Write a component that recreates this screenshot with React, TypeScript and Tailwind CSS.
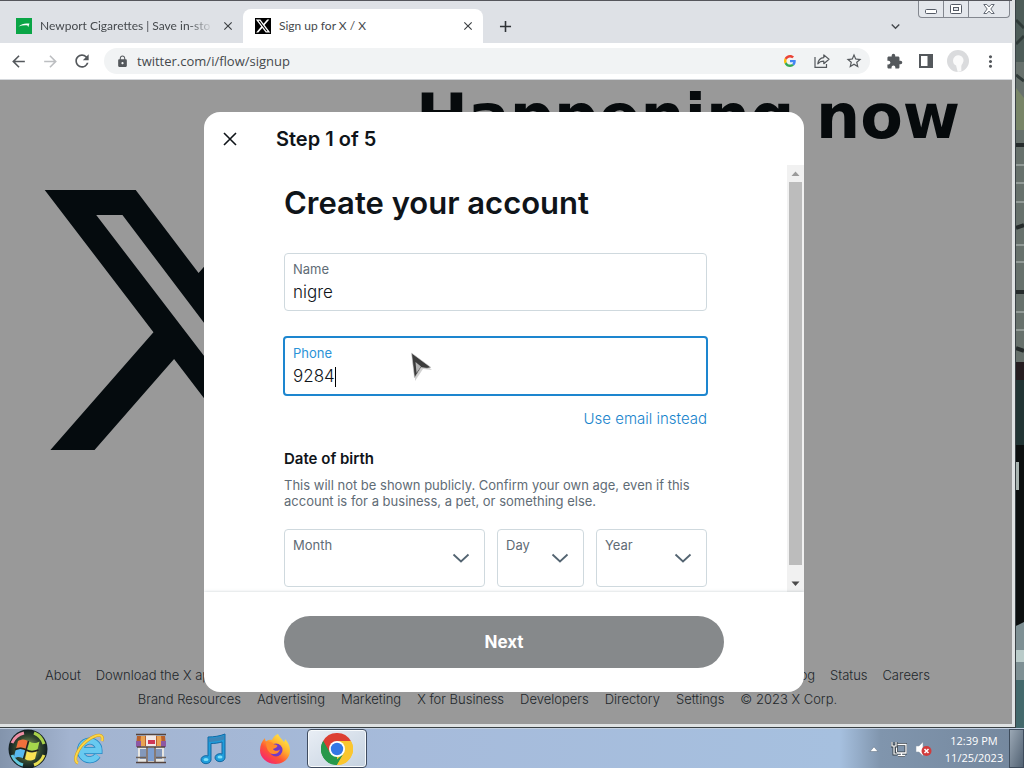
import type { ReactNode } from "react";
import {
  MdAdd,
  MdArrowBack,
  MdArrowForward,
  MdClose,
  MdExtension,
  MdKeyboardArrowDown,
  MdLock,
  MdMoreVert,
  MdRefresh,
  MdStarOutline,
} from "react-icons/md";

const X_PATH =
  "M18.244 2.25h3.308l-7.227 8.26 8.502 11.24H16.17l-5.214-6.817L4.99 21.75H1.68l7.73-8.835L1.254 2.25H8.08l4.713 6.231zm-1.161 17.52h1.833L7.084 4.126H5.117z";

const PRIMARY_LINKS = [
  "About",
  "Download the X app",
  "Help Center",
  "Terms of Service",
  "Privacy Policy",
  "Cookie Policy",
  "Accessibility",
  "Ads info",
  "Blog",
  "Status",
  "Careers",
];

const SECONDARY_LINKS = [
  "Brand Resources",
  "Advertising",
  "Marketing",
  "X for Business",
  "Developers",
  "Directory",
  "Settings",
];

function XLogo({ className }: { className?: string }) {
  return (
    <svg viewBox="0 0 24 24" className={className} fill="currentColor" aria-hidden>
      <path d={X_PATH} />
    </svg>
  );
}

/* ---------- browser chrome ---------- */

function TabStrip() {
  return (
    <div className="flex h-[43px] items-end border-t border-[#55565c] bg-[#dee1e6] font-['Lato','Noto_Sans',sans-serif] text-xs text-[#45494d]">
      <div className="flex h-[34px] w-[243px] items-center pr-2 pl-4">
        <svg viewBox="0 0 16 16" className="size-4 shrink-0" aria-hidden>
          <rect width="16" height="16" fill="#0aa546" />
          <path d="M2.500 8.600C5 6.400 7.500 5.600 10.500 5.400h3l-1.300 3.800-.6-1.800C8.500 7 5.500 7.400 2.500 8.600z" fill="#fff" />
        </svg>
        <span className="ml-2 flex-1 overflow-hidden whitespace-nowrap [mask-image:linear-gradient(to_right,black_86%,transparent)]">
          Newport Cigarettes | Save in-sto
        </span>
        <button type="button" aria-label="Close tab" className="ml-2 text-[#3c4043]">
          <MdClose size={14} />
        </button>
      </div>

      <div className="flex h-[34px] w-60 items-center rounded-t-lg bg-white pr-2 pl-3">
        <span className="flex size-4 shrink-0 items-center justify-center bg-black text-white">
          <XLogo className="size-4" />
        </span>
        <span className="ml-2 flex-1 whitespace-nowrap">Sign up for X / X</span>
        <button type="button" aria-label="Close tab" className="text-[#3c4043]">
          <MdClose size={14} />
        </button>
      </div>

      <button type="button" aria-label="New tab" className="flex h-[34px] w-11 items-center justify-center text-[#2f3236]">
        <MdAdd size={19} />
      </button>

      <div className="ml-auto flex h-full items-start">
        <button type="button" aria-label="Search tabs" className="mt-[17px] mr-3.5 text-[#45494d]">
          <MdKeyboardArrowDown size={17} />
        </button>
        <div className="mr-0.5 flex h-[17px] rounded-b border border-t-0 border-[#83878f] bg-[#e4e7ec]">
          <button type="button" aria-label="Minimize" className="flex w-[25px] items-center justify-center border-r border-[#83878f]">
            <svg viewBox="0 0 12 10" className="h-2.5 w-3" aria-hidden>
              <rect x=".5" y="5.500" width="11" height="4" rx="1" fill="#fff" stroke="#555b66" />
            </svg>
          </button>
          <button type="button" aria-label="Maximize" className="flex w-[25px] items-center justify-center border-r border-[#83878f]">
            <svg viewBox="0 0 12 10" className="h-2.5 w-3" aria-hidden>
              <rect x=".5" y=".5" width="11" height="9" rx="1" fill="#fff" stroke="#555b66" />
              <rect x="3.500" y="3.500" width="5" height="3" fill="#e4e7ec" stroke="#555b66" />
            </svg>
          </button>
          <button type="button" aria-label="Close" className="flex w-10 items-center justify-center">
            <svg viewBox="0 0 12 10" className="h-2.5 w-3" aria-hidden>
              <path
                d="M.8.500h3L6 2.900 8.200.500h3L7.800 5l3.400 4.500h-3L6 7.100 3.800 9.500h-3L4.200 5z"
                fill="#fff"
                stroke="#555b66"
                strokeWidth=".9"
              />
            </svg>
          </button>
        </div>
      </div>
    </div>
  );
}

function ToolButton({ label, children }: { label: string; children: ReactNode }) {
  return (
    <button type="button" aria-label={label} className="flex size-8 shrink-0 items-center justify-center">
      {children}
    </button>
  );
}

function Toolbar() {
  return (
    <div className="flex h-[37px] items-center border-b border-[#d5d8dc] bg-white pr-1.5 pl-0.5 text-[#54585c]">
      <ToolButton label="Back">
        <MdArrowBack size={19} />
      </ToolButton>
      <span className="flex text-[#bcbec1]">
        <ToolButton label="Forward">
          <MdArrowForward size={19} />
        </ToolButton>
      </span>
      <ToolButton label="Reload">
        <MdRefresh size={20} />
      </ToolButton>

      <div className="ml-1.5 flex h-[26px] flex-1 items-center rounded-full bg-[#f1f3f4] pl-3">
        <MdLock size={13} />
        <input
          aria-label="Address"
          defaultValue="twitter.com/i/flow/signup"
          className="ml-2 min-w-0 flex-1 bg-transparent pt-0.5 font-['Open_Sans','Noto_Sans',sans-serif] text-[13px] text-[#45494d] outline-none"
        />
        <ToolButton label="Search with Google">
          <svg viewBox="0 0 48 48" className="size-3" aria-hidden>
            <path fill="#EA4335" d="M24 9.500c3.540 0 6.710 1.220 9.210 3.600l6.850-6.850C35.900 2.380 30.470 0 24 0 14.620 0 6.510 5.380 2.560 13.220l7.980 6.190C12.430 13.720 17.740 9.500 24 9.500z" />
            <path fill="#4285F4" d="M46.980 24.550c0-1.570-.150-3.090-.380-4.550H24v9.020h12.940c-.580 2.960-2.260 5.480-4.780 7.180l7.730 6c4.510-4.180 7.090-10.360 7.090-17.650z" />
            <path fill="#FBBC05" d="M10.530 28.590c-.480-1.450-.760-2.990-.760-4.590s.270-3.140.760-4.590l-7.980-6.190C.920 16.460 0 20.120 0 24c0 3.880.920 7.540 2.560 10.780l7.970-6.190z" />
            <path fill="#34A853" d="M24 48c6.480 0 11.930-2.130 15.890-5.810l-7.730-6c-2.150 1.450-4.920 2.300-8.160 2.300-6.260 0-11.570-4.220-13.470-9.910l-7.980 6.190C6.510 42.620 14.620 48 24 48z" />
          </svg>
        </ToolButton>
        <ToolButton label="Share">
          <svg viewBox="0 0 16 16" className="size-4" fill="none" stroke="currentColor" strokeWidth="1.2" aria-hidden>
            <path d="M1 4v10.400h11.500V11" />
            <path d="M3.800 10.800C4.200 7 6.300 4.900 9.800 4.600V1.900L15 6.300l-5.200 4.400V8.100c-2.700 0-4.600.9-6 2.700z" strokeLinejoin="round" />
          </svg>
        </ToolButton>
        <ToolButton label="Bookmark">
          <MdStarOutline size={18} />
        </ToolButton>
      </div>

      <div className="ml-2 flex">
        <ToolButton label="Extensions">
          <MdExtension size={17} />
        </ToolButton>
        <ToolButton label="Side panel">
          <svg viewBox="0 0 14 14" className="size-3.5" aria-hidden>
            <path d="M0 0h14v14H0zM2 2v10h6.500V2z" fill="currentColor" fillRule="evenodd" />
          </svg>
        </ToolButton>
        <ToolButton label="Profile">
          <svg viewBox="0 0 22 22" className="size-[22px]" aria-hidden>
            <circle cx="11" cy="11" r="11" fill="#dadbdd" />
            <path d="M6 10.500a5.300 5.300 0 1 1 9.500 3.200c-1 1.200-1.200 2-1.200 3.800V21l-3.600 1-1.600-6.500C7.200 14.800 6 13 6 10.500z" fill="#fafafa" />
          </svg>
        </ToolButton>
        <ToolButton label="Menu">
          <MdMoreVert size={19} />
        </ToolButton>
      </div>
    </div>
  );
}

/* ---------- landing page behind the dialog ---------- */

function Landing() {
  return (
    <div className="flex flex-1 flex-col">
      <div className="flex">
        <XLogo className="mt-20 ml-7 size-80 shrink-0 text-[#050b0e]" />
        <h1 className="ml-17 pt-1.5 font-['DejaVu_Sans',sans-serif] text-[62px] leading-none font-bold whitespace-nowrap text-[#060a0c]">
          Happening now
        </h1>
      </div>
      <footer className="mt-auto pr-[82px] pb-[13px] pl-[45px] text-[13px] leading-6 font-light whitespace-nowrap text-[#22272b]">
        <nav className="flex justify-between">
          {PRIMARY_LINKS.map((link) => (
            <a key={link} href="#">
              {link}
            </a>
          ))}
        </nav>
        <nav className="flex justify-center gap-4">
          {SECONDARY_LINKS.map((link) => (
            <a key={link} href="#">
              {link}
            </a>
          ))}
          <span>© 2023 X Corp.</span>
        </nav>
      </footer>
    </div>
  );
}

/* ---------- sign-up dialog ---------- */

function DateSelect({ id, label }: { id: string; label: string }) {
  return (
    <div className="grid h-[58px] rounded border border-[#cfd9de]">
      <label htmlFor={id} className="col-start-1 row-start-1 px-2 pt-[7px] text-[13px] leading-4 text-[#5f6c76]">
        {label}
      </label>
      <svg
        viewBox="0 0 18 10"
        className="col-start-1 row-start-1 mr-3.5 h-2.5 w-[18px] self-center justify-self-end"
        fill="none"
        stroke="#536471"
        strokeWidth="1.800"
        aria-hidden
      >
        <path d="M1.500 1.500L9 8.500l7.500-7" />
      </svg>
      <select id={id} defaultValue="" className="col-start-1 row-start-1 appearance-none bg-transparent px-2 pt-5 outline-none">
        <option value="" disabled />
      </select>
    </div>
  );
}

function ScrollBar() {
  return (
    <div className="flex w-[17px] shrink-0 flex-col items-center bg-[#f1f1f1]" aria-hidden>
      <svg viewBox="0 0 17 17" className="size-[17px]">
        <path d="M4.500 11L8.500 6.500 12.500 11z" fill="#9b9b9b" />
      </svg>
      <div className="w-[13px] flex-1 bg-[#bcbcbc]" />
      <svg viewBox="0 0 17 17" className="mt-2.5 size-[17px]">
        <path d="M4.500 6.500L8.500 11 12.500 6.500z" fill="#4a4a4a" />
      </svg>
    </div>
  );
}

function Pointer() {
  return (
    <svg viewBox="0 0 24 30" className="pointer-events-none absolute top-3.5 left-[125px] h-[30px] w-6" aria-hidden>
      <path d="M5 5l17 13-9-1-8 12z" fill="#000" opacity=".18" />
      <path d="M1.500 1l19.500 14.500-4 .8-6-.8L4.500 26z" fill="#3c3c3c" stroke="#d0d0d0" strokeWidth=".6" />
      <path d="M5.500 10l1 11L11 14.500z" fill="#b5b5b5" />
    </svg>
  );
}

function SignupDialog() {
  return (
    <div
      role="dialog"
      aria-labelledby="dialog-title"
      className="flex h-[580px] w-full max-w-[600px] flex-col overflow-hidden rounded-2xl bg-white text-[#0f1419]"
    >
      <header className="flex h-[53px] shrink-0 items-center pl-4">
        <button type="button" aria-label="Close" className="mr-9 flex size-5 items-center justify-center">
          <svg viewBox="0 0 14 14" className="size-3.5 shrink-0" fill="none" stroke="currentColor" strokeWidth="1.600" aria-hidden>
            <path d="M1 1l12 12M13 1L1 13" />
          </svg>
        </button>
        <h2 id="dialog-title" className="text-[20px] leading-6 font-semibold">
          Step 1 of 5
        </h2>
      </header>

      <div className="flex min-h-0 flex-1">
        <form className="min-w-0 flex-1 overflow-hidden px-20 pt-5">
          <h1 className="text-[31px] leading-9 font-semibold">Create your account</h1>

          <div className="mt-8 flex h-[58px] flex-col rounded border border-[#cfd9de] px-2 pt-[7px]">
            <label htmlFor="name" className="text-[13px] leading-4 text-[#5f6c76]">
              Name
            </label>
            <input id="name" defaultValue="nigre" className="mt-1 h-6 text-[17px] font-light outline-none" />
          </div>

          <div className="relative mt-[25px] -mr-px -ml-px flex h-[60px] flex-col rounded border-2 border-[#1d86cf] px-2 pt-[7px]">
            <label htmlFor="phone" className="text-[13px] leading-4 text-[#2b93d8]">
              Phone
            </label>
            <div className="mt-1 flex items-center">
              <input
                id="phone"
                type="tel"
                defaultValue="9284"
                className="h-6 field-sizing-content text-[17px] font-light outline-none"
              />
              <span className="h-5 w-px bg-black" />
            </div>
            <Pointer />
          </div>

          <div className="mt-[13px] flex justify-end">
            <a href="#" className="text-[15px] leading-5 font-light text-[#1783cc]">
              Use email instead
            </a>
          </div>

          <h3 className="mt-5 text-[15px] leading-5 font-semibold">Date of birth</h3>
          <p className="mt-2 text-[13px] leading-4 text-[#5f6c76]">
            This will not be shown publicly. Confirm your own age, even if this account is for a business, a pet, or
            something else.
          </p>

          <div className="mt-5 grid grid-cols-[201fr_87fr_111fr] gap-3">
            <DateSelect id="month" label="Month" />
            <DateSelect id="day" label="Day" />
            <DateSelect id="year" label="Year" />
          </div>
        </form>
        <ScrollBar />
      </div>

      <footer className="shrink-0 px-20 py-6 shadow-[0_0_3px_rgba(101,119,134,0.35)]">
        <button type="button" className="h-[52px] w-full rounded-full bg-[#86898b] pt-0.5 text-[17px] font-bold text-white">
          Next
        </button>
      </footer>
    </div>
  );
}

/* ---------- desktop ---------- */

function Wallpaper() {
  return (
    <div className="w-2 shrink-0 bg-[#1c2122]" aria-hidden>
      <svg viewBox="0 0 8 728" preserveAspectRatio="none" className="h-full w-full">
        <rect width="8" height="375" fill="#67716c" />
        <rect width="8" height="62" fill="#4d5c58" />
        <path d="M0 20l8 8M0 44l8-8M0 75l8 6" stroke="#303b39" strokeWidth="3" />
        <path d="M0 88l8 10v32H0z" fill="#788567" />
        <path d="M0 145h8M0 228l8-3M0 292h8M0 348l8 3" stroke="#252b2b" strokeWidth="4" />
        <path d="M0 165h8M0 183h8M0 202h8M0 245h8M0 262h8M0 312h8M0 330h8" stroke="#929b97" strokeWidth="2" />
        <rect y="362" width="8" height="18" fill="#251d20" />
        <rect y="380" width="8" height="65" fill="#213434" />
        <rect y="445" width="8" height="180" fill="#0c0f0f" />
        <path d="M0 462h3v28H0z" fill="#a9b4b1" />
        <path d="M0 626l8-4v106H0z" fill="#7e9094" />
        <path d="M0 650h8v12H0z" fill="#b9cbc9" />
        <path d="M0 680h8v48H0z" fill="#43696c" />
      </svg>
    </div>
  );
}

function StartOrb() {
  return (
    <svg viewBox="0 0 42 40" className="h-10 w-[42px]" aria-hidden>
      <defs>
        <radialGradient id="orb">
          <stop offset="0" stopColor="#9fb86a" />
          <stop offset=".65" stopColor="#31462f" />
          <stop offset="1" stopColor="#101c20" />
        </radialGradient>
      </defs>
      <circle cx="21" cy="20" r="19.500" fill="url(#orb)" />
      <path d="M5 14A17 17 0 0 1 17 4" stroke="#ee8fa5" strokeWidth="3" fill="none" />
      <path d="M27 4a17 17 0 0 1 10 11" stroke="#a9d24a" strokeWidth="3" fill="none" />
      <path d="M5 26a17 17 0 0 0 11 10" stroke="#62c8dd" strokeWidth="3" fill="none" />
      <path d="M27 36a17 17 0 0 0 10-10" stroke="#e8df52" strokeWidth="3" fill="none" />
      <path d="M11 12c4-2 7-2 10 0l-2 8c-3-2-6-2-10 0z" fill="#f0703c" />
      <path d="M22.500 12.500c3 2 6 2 10 0l-2 8c-4 2-7 2-10 0z" fill="#a5d64c" />
      <path d="M8.500 21.500c4-2 7-2 10 0l-2 8c-3-2-6-2-10 0z" fill="#59b9ef" />
      <path d="M20 22c3 2 6 2 10 0l-2 8c-4 2-7 2-10 0z" fill="#fbe254" />
      <path d="M8 20.500c5-2 8-1.500 11.500.5s7 2 12 0M21.500 12l-5 18" stroke="#23221c" strokeWidth="1.500" fill="none" />
    </svg>
  );
}

function ExplorerIcon() {
  return (
    <svg viewBox="0 0 32 32" className="size-8" fill="none" aria-hidden>
      <path d="M24.500 22.500A9.300 9.300 0 1 1 26 17.500H10" stroke="#2587c4" strokeWidth="7" />
      <path d="M24.500 22.500A9.300 9.300 0 1 1 26 17.500H10" stroke="#68c9f0" strokeWidth="5.500" />
      <path d="M5 30C-1 28 5 14 15 7S31 1 29 8" stroke="#d79d1c" strokeWidth="3" />
      <path d="M5 30C-1 28 5 14 15 7S31 1 29 8" stroke="#fad648" strokeWidth="2" />
    </svg>
  );
}

function StoreIcon() {
  return (
    <svg viewBox="0 0 32 32" className="size-8" aria-hidden>
      <path d="M3 13h26v16H3z" fill="#e7e6e2" />
      <path d="M2 3h28l1 10H1z" fill="#b9612c" />
      <path d="M6 3h4v10H5zM22 3h4l1 10h-5z" fill="#e9a252" />
      <path d="M1 8h5v6H1zM26 8h5v6h-5z" fill="#8d58a3" />
      <path d="M11 2h10v12H11z" fill="#f0e8e8" />
      <path d="M13 7h7v4h-7z" fill="#cf3857" />
      <path d="M5 16h6v10H5zM21 16h6v10h-6z" fill="#8398bb" />
      <path d="M13 15h6v13h-6z" fill="#7d9fd1" />
      <path d="M1 1.500h30M2 14h28M1 29.500h30M12 14v15M20 14v15" stroke="#54433d" strokeWidth="1.300" />
      <path d="M1 24.500h10M21 24.500h10" stroke="#6e6158" strokeWidth="1.500" />
    </svg>
  );
}

function MusicIcon() {
  return (
    <svg viewBox="0 0 28 32" className="h-8 w-7" aria-hidden>
      <path
        d="M9 4c6 0 12-1 17-3v24a5 4 0 1 1-3-4V9c-4 1-7 1.500-11 1.500V27a5 4 0 1 1-3-4z"
        fill="#209ddb"
        stroke="#1268a3"
      />
      <path d="M10 5c6 0 11-1 15-2.500v4C20 8 15 9 10 9z" fill="#3d86b8" />
      <ellipse cx="7" cy="26.500" rx="2.500" ry="1.500" fill="#7be0fa" />
      <ellipse cx="21" cy="24" rx="2.500" ry="1.500" fill="#7be0fa" />
    </svg>
  );
}

function FirefoxIcon() {
  return (
    <svg viewBox="0 0 32 32" className="size-8" aria-hidden>
      <defs>
        <linearGradient id="fox" x1=".85" y1=".1" x2=".2" y2=".95">
          <stop offset="0" stopColor="#ffe948" />
          <stop offset=".35" stopColor="#ffb02e" />
          <stop offset=".65" stopColor="#ff5634" />
          <stop offset="1" stopColor="#f42372" />
        </linearGradient>
      </defs>
      <path
        d="M19 1c1 3 4 5 6 8 1-1 1-2 1-3 3 3 5 7 5 11.500C31 25.500 24.500 31 16.500 31S1 25 1 17.500C1 12 3 8 6 5c0 1.500.3 2.500 1 3.500 1.500-1.500 4-2 6-1.500C14 4.500 16 2 19 1z"
        fill="url(#fox)"
      />
      <circle cx="17" cy="17" r="6.500" fill="#713ac7" />
      <path d="M7 9c4-1 7 .5 8 2.500 2 0 3 .5 3.500 1.500-1 2-3 2-4.500 3 1 2.500 5 2 7 .5-1 3.500-4 5-7 4.500-4-.5-7-5-7-12z" fill="#ff8a2c" />
    </svg>
  );
}

function ChromeIcon() {
  return (
    <svg viewBox="0 0 32 32" className="size-8" aria-hidden>
      <path d="M16 16L2.140 8A16 16 0 0 1 29.860 8z" fill="#dc3f32" />
      <path d="M16 16L29.860 8A16 16 0 0 1 16 32z" fill="#fbc62f" />
      <path d="M16 16v16A16 16 0 0 1 2.140 8z" fill="#27984b" />
      <path d="M16 8h13.860L23 20z" fill="#fbc62f" />
      <path d="M2.140 8L9 20l7-12z" fill="#dc3f32" />
      <path d="M2.140 8L9 20l7 4-5 7.200A16 16 0 0 1 2.140 8z" fill="#27984b" />
      <path d="M23 20l-7 12-5-1z" fill="#27984b" />
      <path d="M16 32l7-12V8h6.860A16 16 0 0 1 16 32z" fill="#fbc62f" />
      <circle cx="16" cy="16" r="8" fill="#fff" />
      <circle cx="16" cy="16" r="6.200" fill="#3477e5" />
    </svg>
  );
}

const PINNED = [
  { label: "Internet Explorer", icon: <ExplorerIcon /> },
  { label: "Store", icon: <StoreIcon /> },
  { label: "Music", icon: <MusicIcon /> },
  { label: "Firefox", icon: <FirefoxIcon /> },
];

function Taskbar() {
  return (
    <div className="flex h-10 shrink-0 items-center border-t border-[#c3d0e2] bg-[linear-gradient(to_right,#8394ac_0,#a3b4d0_70px,#a6bbdb_40%,#a6c0df_82%,#8095ad_86%,#74879d)]">
      <button type="button" aria-label="Start" className="flex h-full w-[57px] items-center justify-center pr-0.5">
        <StartOrb />
      </button>
      <div className="ml-0.5 flex h-full gap-0.5">
        {PINNED.map(({ label, icon }) => (
          <button key={label} type="button" aria-label={label} className="flex h-full w-15 items-center justify-center">
            {icon}
          </button>
        ))}
        <button
          type="button"
          aria-label="Chrome"
          className="flex h-full w-15 items-center justify-center rounded-sm border border-[#3f4c60] bg-linear-to-br from-[#e9eef5] to-[#c5d2e0] shadow-[inset_0_0_0_1px_#f7fafc]"
        >
          <ChromeIcon />
        </button>
      </div>

      <div className="ml-auto flex h-full items-center">
        <button type="button" aria-label="Show hidden icons" className="mr-3">
          <svg viewBox="0 0 10 6" className="h-1.5 w-2.5" aria-hidden>
            <path d="M1 5.500L5 .8l4 4.700z" fill="#fff" stroke="#59687a" strokeWidth=".5" />
          </svg>
        </button>
        <svg viewBox="0 0 16 16" className="size-4" fill="none" aria-hidden>
          <path d="M5.500 3.500h9.500v8.500H5.500zM7 14.500h7M10.500 12v2.500" stroke="#39424b" strokeWidth="3" />
          <path d="M5.500 3.500h9.500v8.500H5.500zM7 14.500h7M10.500 12v2.500" stroke="#fff" strokeWidth="1.300" />
          <path d="M1 1v4h4V1M3 5v8h3" stroke="#39424b" strokeWidth="3" />
          <path d="M1 1v4h4V1M3 5v8h3" stroke="#fff" strokeWidth="1.200" />
        </svg>
        <svg viewBox="0 0 18 16" className="ml-2 h-4 w-[18px]" aria-hidden>
          <path d="M1 5h3l4-4v14l-4-4H1z" fill="#fff" stroke="#8b98a8" strokeWidth=".5" />
          <circle cx="11.500" cy="10" r="5" fill="#d23b3b" />
          <path d="M9.500 8l4 4M13.500 8l-4 4" stroke="#fff" strokeWidth="1.500" />
        </svg>
        <div className="mr-0.5 ml-2 w-[66px] text-center font-['Open_Sans','Noto_Sans',sans-serif] text-[11px] leading-[17px] whitespace-nowrap text-white">
          <div>12:39 PM</div>
          <div>11/25/2023</div>
        </div>
        <button
          type="button"
          aria-label="Show desktop"
          className="h-full w-[15px] border border-[#3e4c5c] bg-linear-to-br from-[#9ba8b5] to-[#526273]"
        />
      </div>
    </div>
  );
}

export default function App() {
  return (
    <div className="flex min-h-screen flex-col font-['Inter',sans-serif]">
      <div className="flex flex-1">
        <div className="flex min-w-0 flex-1 flex-col border-r border-b border-[#3a4246]">
          <div className="flex min-w-0 flex-1 flex-col border-r-3 border-b-3 border-[#dfe2e3]">
            <TabStrip />
            <Toolbar />
            <main className="relative flex flex-1 overflow-hidden bg-[#999999]">
              <Landing />
              <div className="absolute inset-0 flex items-center justify-center pr-1">
                <SignupDialog />
              </div>
            </main>
          </div>
        </div>
        <Wallpaper />
      </div>
      <Taskbar />
    </div>
  );
}
